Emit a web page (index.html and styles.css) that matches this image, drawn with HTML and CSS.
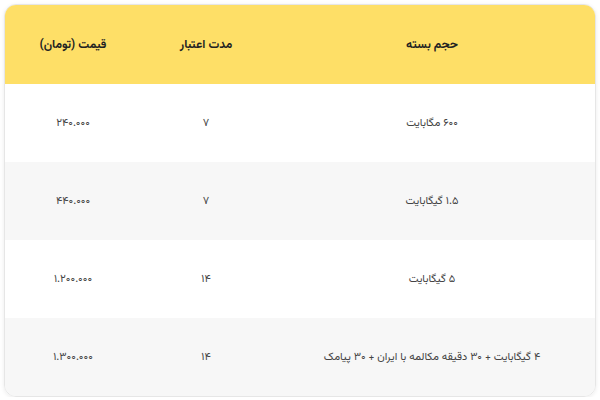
FILE: index.html
```html
<!DOCTYPE html>
<html lang="fa" dir="rtl">
<head>
<meta charset="utf-8">
<link rel="stylesheet" href="styles.css">
</head>
<body>
<div class="card">
  <table class="plans">
    <colgroup>
      <col class="c-size">
      <col class="c-days">
      <col class="c-price">
    </colgroup>
    <thead>
      <tr>
        <th>حجم بسته</th>
        <th>مدت اعتبار</th>
        <th>قیمت (تومان)</th>
      </tr>
    </thead>
    <tbody>
      <tr>
        <td>۶۰۰ مگابایت</td>
        <td>۷</td>
        <td>۲۴۰.۰۰۰</td>
      </tr>
      <tr>
        <td>۱.۵ گیگابایت</td>
        <td>۷</td>
        <td>۴۴۰.۰۰۰</td>
      </tr>
      <tr>
        <td>۵ گیگابایت</td>
        <td>۱۴</td>
        <td>۱.۲۰۰.۰۰۰</td>
      </tr>
      <tr>
        <td>۴ گیگابایت + ۳۰ دقیقه مکالمه با ایران + ۳۰ پیامک</td>
        <td>۱۴</td>
        <td>۱.۳۰۰.۰۰۰</td>
      </tr>
    </tbody>
  </table>
</div>
</body>
</html>
```
FILE: styles.css
```css
html, body {
  margin: 0;
  padding: 0;
  background: #ffffff;
}
body {
  padding: 4px 4px 0 4px;
  font-family: "Vazirmatn", "Noto Sans Arabic", "Noto Naskh Arabic", "DejaVu Sans", sans-serif;
}
.card {
  width: 592px;
  border-radius: 12px;
  overflow: hidden;
  border: 1px solid #e6e6e6;
  box-shadow: 0 1px 4px rgba(0,0,0,0.08);
  box-sizing: border-box;
}
.plans {
  width: 100%;
  border-collapse: collapse;
  table-layout: fixed;
}
.c-size { width: 326px; }
.c-days { width: 126px; }
.c-price { width: 140px; }
.plans th {
  background: #fedf67;
  height: 79px;
  font-size: 12px;
  font-weight: bold;
  color: #222222;
  text-align: center;
  padding: 0;
}
.plans td {
  height: 78px;
  font-size: 11px;
  color: #444444;
  text-align: center;
  padding: 0;
}
.plans tbody tr:nth-child(even) td {
  background: #f7f7f7;
}
```
